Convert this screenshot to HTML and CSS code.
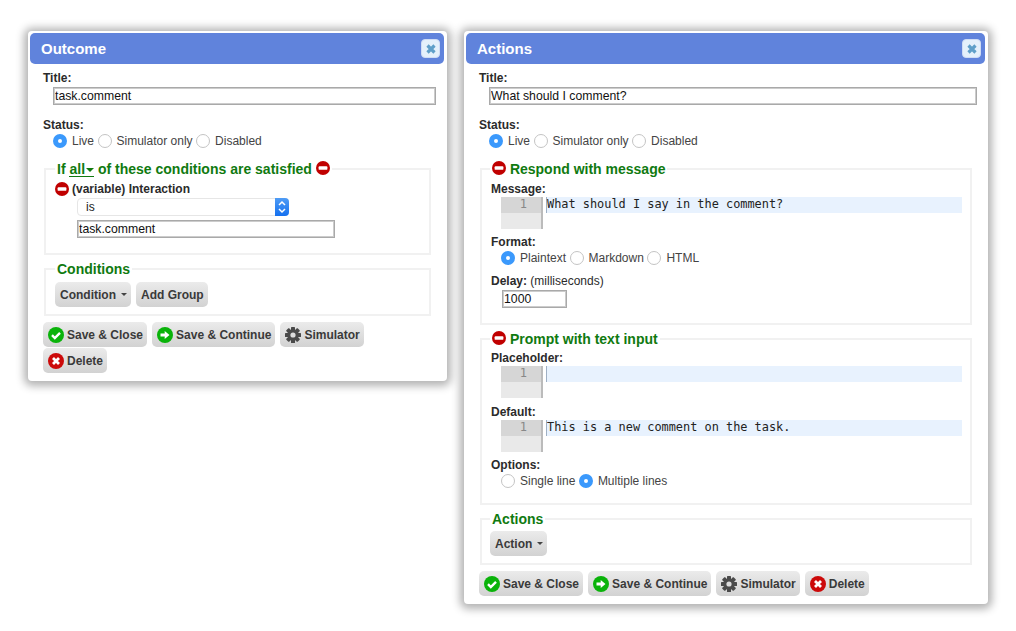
FILE: index.html
```html
<!DOCTYPE html>
<html lang="en">
<head>
  <meta charset="UTF-8">
  <title>Outcome and Actions</title>
  <link rel="stylesheet" href="styles.css">
</head>
<body>
  <svg class="defs" width="0" height="0">
    <symbol id="i-remove" viewBox="0 0 16 16">
      <circle cx="8" cy="8" r="8" fill="#c00000"/>
      <rect x="3" y="6" width="10" height="4" rx="1" fill="#fff"/>
    </symbol>
    <symbol id="i-check" viewBox="0 0 16 16">
      <circle cx="8" cy="8" r="8" fill="#0ab30a"/>
      <path d="M4 8.2l2.8 2.8L12 5.8" fill="none" stroke="#fff" stroke-width="2.4"/>
    </symbol>
    <symbol id="i-next" viewBox="0 0 16 16">
      <circle cx="8" cy="8" r="8" fill="#0ab30a"/>
      <path d="M3.5 6.6h4.2V4l4.8 4-4.8 4V9.4H3.500z" fill="#fff"/>
    </symbol>
    <symbol id="i-delete" viewBox="0 0 16 16">
      <circle cx="8" cy="8" r="8" fill="#cc0a0a"/>
      <path d="M5 5l6 6M11 5l-6 6" fill="none" stroke="#fff" stroke-width="2.8"/>
    </symbol>
    <symbol id="i-gear" viewBox="0 0 16 16">
      <g fill="#4a4a4a">
        <rect x="6" y="0" width="4" height="16" rx=".6"/>
        <rect x="6" y="0" width="4" height="16" rx=".6" transform="rotate(45 8 8)"/>
        <rect x="6" y="0" width="4" height="16" rx=".6" transform="rotate(90 8 8)"/>
        <rect x="6" y="0" width="4" height="16" rx=".6" transform="rotate(135 8 8)"/>
        <circle cx="8" cy="8" r="5.600"/>
      </g>
      <circle cx="8" cy="8" r="2.600" fill="#dcdcdc"/>
    </symbol>
    <symbol id="i-close" viewBox="0 0 12 12">
      <path d="M2.500 2.500l7 7M9.500 2.500l-7 7" fill="none" stroke="#5f9fc9" stroke-width="3.200"/>
    </symbol>
  </svg>

  <section class="dialog dialog-outcome">
    <header class="titlebar">
      <h2>Outcome</h2>
      <button class="close"><svg width="12" height="12"><use href="#i-close"/></svg></button>
    </header>
    <div class="content">
      <label class="field-label">Title:</label>
      <input class="text-input wide" type="text" value="task.comment">

      <label class="field-label status-label">Status:</label>
      <div class="radios">
        <label><input type="radio" name="status1" checked> Live</label>
        <label><input type="radio" name="status1"> Simulator only</label>
        <label><input type="radio" name="status1"> Disabled</label>
      </div>

      <fieldset class="conditions-set">
        <legend>If <span class="all">all<i class="caret"></i></span> of these conditions are satisfied <svg class="icon" width="14" height="14"><use href="#i-remove"/></svg></legend>
        <div class="variable-row"><svg class="icon" width="14" height="14"><use href="#i-remove"/></svg> (variable) Interaction</div>
        <div class="select-box">
          <span>is</span>
          <span class="stepper"><svg width="8" height="14" viewBox="0 0 8 14"><path d="M1 5l3-3 3 3M1 9l3 3 3-3" fill="none" stroke="#fff" stroke-width="1.500"/></svg></span>
        </div>
        <input class="text-input condition-value" type="text" value="task.comment">
      </fieldset>

      <fieldset class="button-set">
        <legend>Conditions</legend>
        <div class="buttons">
          <button class="btn">Condition <i class="caret dark"></i></button>
          <button class="btn">Add Group</button>
        </div>
      </fieldset>

      <div class="buttons footer">
        <button class="btn"><svg width="16" height="16"><use href="#i-check"/></svg>Save &amp; Close</button>
        <button class="btn"><svg width="16" height="16"><use href="#i-next"/></svg>Save &amp; Continue</button>
        <button class="btn"><svg width="16" height="16"><use href="#i-gear"/></svg>Simulator</button>
        <button class="btn"><svg width="16" height="16"><use href="#i-delete"/></svg>Delete</button>
      </div>
    </div>
  </section>

  <section class="dialog dialog-actions">
    <header class="titlebar">
      <h2>Actions</h2>
      <button class="close"><svg width="12" height="12"><use href="#i-close"/></svg></button>
    </header>
    <div class="content">
      <label class="field-label">Title:</label>
      <input class="text-input wide" type="text" value="What should I comment?">

      <label class="field-label status-label">Status:</label>
      <div class="radios">
        <label><input type="radio" name="status2" checked> Live</label>
        <label><input type="radio" name="status2"> Simulator only</label>
        <label><input type="radio" name="status2"> Disabled</label>
      </div>

      <fieldset class="action-set respond-set">
        <legend><svg class="icon" width="14" height="14"><use href="#i-remove"/></svg> Respond with message</legend>
        <label class="field-label">Message:</label>
        <div class="editor">
          <div class="gutter"><span>1</span></div>
          <div class="line">What should I say in the comment?</div>
        </div>
        <label class="field-label format-label">Format:</label>
        <div class="radios">
          <label><input type="radio" name="format" checked> Plaintext</label>
          <label><input type="radio" name="format"> Markdown</label>
          <label><input type="radio" name="format"> HTML</label>
        </div>
        <label class="field-label delay-label">Delay: <span class="hint">(milliseconds)</span></label>
        <input class="text-input delay" type="text" value="1000">
      </fieldset>

      <fieldset class="action-set prompt-set">
        <legend><svg class="icon" width="14" height="14"><use href="#i-remove"/></svg> Prompt with text input</legend>
        <label class="field-label">Placeholder:</label>
        <div class="editor">
          <div class="gutter"><span>1</span></div>
          <div class="line"></div>
        </div>
        <label class="field-label after-editor">Default:</label>
        <div class="editor">
          <div class="gutter"><span>1</span></div>
          <div class="line">This is a new comment on the task.</div>
        </div>
        <label class="field-label options-label">Options:</label>
        <div class="radios">
          <label><input type="radio" name="lines"> Single line</label>
          <label><input type="radio" name="lines" checked> Multiple lines</label>
        </div>
      </fieldset>

      <fieldset class="button-set">
        <legend>Actions</legend>
        <div class="buttons">
          <button class="btn">Action <i class="caret dark"></i></button>
        </div>
      </fieldset>

      <div class="buttons footer">
        <button class="btn"><svg width="16" height="16"><use href="#i-check"/></svg>Save &amp; Close</button>
        <button class="btn"><svg width="16" height="16"><use href="#i-next"/></svg>Save &amp; Continue</button>
        <button class="btn"><svg width="16" height="16"><use href="#i-gear"/></svg>Simulator</button>
        <button class="btn"><svg width="16" height="16"><use href="#i-delete"/></svg>Delete</button>
      </div>
    </div>
  </section>
</body>
</html>
```

FILE: styles.css
```css
html, body {
  margin: 0;
  height: 631px;
  overflow: hidden;
}
body {
  display: flex;
  align-items: flex-start;
  gap: 17px;
  padding: 31px 0 0 28px;
  box-sizing: border-box;
  background: #fff;
  color: #333;
  font-family: "Liberation Sans", Arial, sans-serif;
  font-size: 12px;
}
.defs {
  position: absolute;
}
.dialog {
  background: #fff;
  border-radius: 4px;
  box-shadow: 0 1px 9px 4px rgba(0, 0, 0, 0.3);
  padding: 2px 3px 8px 2px;
  box-sizing: border-box;
}
.dialog-outcome {
  width: 419px;
}
.dialog-actions {
  width: 524px;
}
.titlebar {
  display: flex;
  align-items: center;
  justify-content: space-between;
  height: 31px;
  padding: 0 4px 0 11px;
  background: #6083dc;
  border-radius: 5px;
}
.titlebar h2 {
  margin: 0;
  color: #fff;
  font-size: 15px;
  font-weight: bold;
}
.close {
  display: flex;
  align-items: center;
  justify-content: center;
  width: 19px;
  height: 19px;
  padding: 0;
  border: 1px solid #cfdcf5;
  border-radius: 4px;
  background: #e4f0fb;
}
.content {
  padding: 7px 8px 0 13px;
}
.field-label {
  display: block;
  height: 14px;
  line-height: 14px;
  font-weight: bold;
  color: #2b2b2b;
}
.hint {
  font-weight: normal;
}
.status-label {
  margin-top: 13px;
}
.text-input {
  display: block;
  box-sizing: border-box;
  height: 18px;
  margin: 2px 0 0;
  padding: 0 1px;
  border: 1px solid #a9a9a9;
  outline: 1px solid #ccc;
  outline-offset: -2px;
  font: 12.250px "Liberation Sans", Arial, sans-serif;
  color: #111;
  background: #fff;
}
.wide {
  width: calc(100% - 10px);
  margin-left: 10px;
}
.condition-value {
  width: 258px;
  margin: 4px 0 0 22px;
}
.delay {
  width: 65px;
  margin-left: 11px;
}
.radios {
  display: flex;
  gap: 3.500px;
  height: 14px;
  margin-top: 2px;
  padding-left: 10px;
  line-height: 14px;
  color: #444;
}
.radios label {
  display: flex;
  align-items: center;
  gap: 5px;
}
.radios input {
  appearance: none;
  box-sizing: border-box;
  width: 14px;
  height: 14px;
  margin: 0;
  border: 1px solid #c4c4c4;
  border-radius: 50%;
  background: #fff;
}
.radios input:checked {
  border: 5px solid #3b99fc;
}
fieldset {
  margin: 13px 5px 0 1px;
  border: 2px solid #f1f1f1;
  padding: 0;
}
fieldset + fieldset {
  margin-top: 6px;
}
legend {
  height: 16px;
  line-height: 16px;
  padding: 0 2px;
  color: #107a10;
  font-size: 14px;
  font-weight: bold;
  white-space: nowrap;
}
.icon {
  vertical-align: -1px;
}
.all {
  display: inline-block;
  border-bottom: 1px solid #107a10;
  line-height: 14px;
}
.caret {
  display: inline-block;
  width: 0;
  height: 0;
  margin-left: 1px;
  vertical-align: 2px;
  border-left: 4px solid transparent;
  border-right: 4px solid transparent;
  border-top: 4px solid #107a10;
}
.caret.dark {
  margin-left: 2px;
  border-left-width: 3px;
  border-right-width: 3px;
  border-top: 3px solid #444;
}
.conditions-set {
  height: 94px;
  box-sizing: border-box;
  padding: 5px 0 0 9px;
}
.variable-row {
  display: flex;
  align-items: center;
  gap: 3px;
  height: 14px;
  font-weight: bold;
  color: #2b2b2b;
}
.select-box {
  display: flex;
  justify-content: space-between;
  align-items: center;
  box-sizing: border-box;
  width: 212px;
  height: 18px;
  margin: 2px 0 0 22px;
  padding-left: 8px;
  border: 1px solid #e6e6e6;
  border-radius: 4px;
  color: #222;
  background: #fff;
}
.stepper {
  display: flex;
  align-items: center;
  justify-content: center;
  width: 14px;
  height: 18px;
  margin: 0 -1px 0 0;
  border-radius: 0 4px 4px 0;
  background: linear-gradient(#4f9cf5, #1470ef);
}
.button-set {
  padding: 5px 0 7px 9px;
}
.dialog-actions .button-set {
  padding: 4px 0 7px 8px;
}
.buttons {
  display: flex;
  flex-wrap: wrap;
  gap: 1px 5px;
}
.footer {
  margin-top: 6px;
  padding-right: 5px;
}
.btn {
  display: flex;
  align-items: center;
  gap: 3px;
  height: 25px;
  padding: 0 4px 0 5px;
  border: 0;
  border-radius: 5px;
  background: linear-gradient(#ebebeb, #d2d2d2);
  color: #3a3a3a;
  font: bold 12px "Liberation Sans", Arial, sans-serif;
  white-space: nowrap;
}
.action-set {
  padding: 4px 0 15px 9px;
}
.action-set legend {
  margin-left: -1px;
}
.respond-set {
  padding-top: 5px;
}
.format-label {
  margin-top: 6px;
}
.after-editor {
  margin-top: 7px;
}
.options-label {
  margin-top: 6px;
}
.delay-label {
  margin-top: 9px;
}
.editor {
  display: flex;
  height: 32px;
  margin: 1px 8px 0 10px;
}
.gutter {
  box-sizing: border-box;
  width: 42px;
  border-right: 2px solid #bbb;
  background: #e9e9e9;
  flex: none;
}
.gutter span {
  display: block;
  height: 16px;
  padding-right: 14px;
  text-align: right;
  background: #d6d6d6;
  color: #888;
  font: 12px/14px "DejaVu Sans Mono", monospace;
}
.line {
  flex: 1;
  height: 16px;
  margin-left: 3px;
  border-left: 1px solid #9fb0c4;
  background: #e8f2fe;
  color: #222;
  font: 11.900px/15px "DejaVu Sans Mono", monospace;
  white-space: pre;
}
```
